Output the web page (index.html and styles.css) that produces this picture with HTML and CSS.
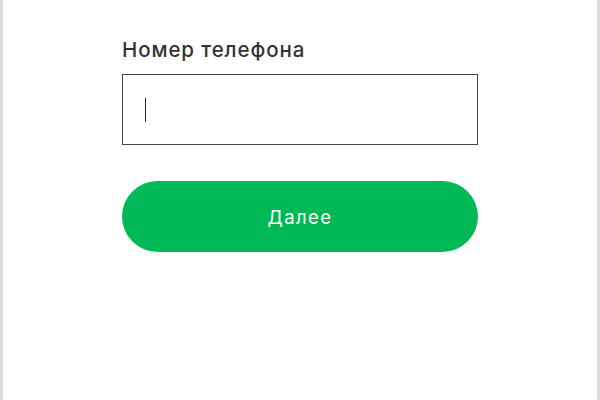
FILE: index.html
```html
<!DOCTYPE html>
<html lang="ru">
<head>
<meta charset="utf-8">
<title>Вход</title>
<link rel="stylesheet" href="styles.css">
</head>
<body>
<main class="page">
  <form class="form">
    <label class="label">Номер телефона</label>
    <div class="field"><span class="caret"></span></div>
    <button type="button" class="btn">Далее</button>
  </form>
</main>
</body>
</html>
```
FILE: styles.css
```css
html, body {
  margin: 0;
  padding: 0;
  height: 100%;
}
body {
  background: #ffffff;
  font-family: Inter, "Liberation Sans", Arial, sans-serif;
}
.page {
  box-sizing: border-box;
  height: 400px;
  border-left: 3px solid #dcdcdc;
  border-right: 3px solid #dcdcdc;
  padding: 37px 0 0 119px;
}
.form {
  width: 356px;
  display: flex;
  flex-direction: column;
}
.label {
  font-size: 20.5px;
  font-weight: 500;
  line-height: 25px;
  color: #333333;
  letter-spacing: 0.9px;
}
.field {
  box-sizing: border-box;
  margin-top: 12px;
  height: 71px;
  border: 1.5px solid #444444;
  display: flex;
  align-items: center;
  padding-left: 21.5px;
}
.caret {
  display: block;
  width: 1.5px;
  height: 24px;
  background: #222222;
}
.btn {
  margin-top: 36px;
  height: 71px;
  border: none;
  border-radius: 36px;
  background: #00b956;
  color: #ffffff;
  font-family: Inter, "Liberation Sans", Arial, sans-serif;
  font-size: 18.5px;
  font-weight: 400;
  letter-spacing: 1.4px;
  padding: 0;
}
```
